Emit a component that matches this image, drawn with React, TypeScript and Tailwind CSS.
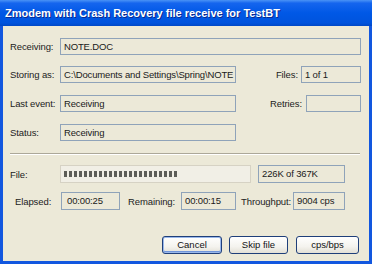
import React from 'react';

const font = "font-['Liberation_Sans',Arial,sans-serif]";

interface FieldProps {
  value?: string;
  className?: string;
}

const Field: React.FC<FieldProps> = ({ value = '', className = '' }) => (
  <div
    className={`h-[17px] border border-[#8fa3b9] bg-[#ece9d8] pl-[3px] text-[9.5px] tracking-[-0.15px] leading-[15px] text-[#1a1a1a] whitespace-nowrap overflow-hidden ${className}`}
  >
    {value}
  </div>
);

const Label: React.FC<{ children: React.ReactNode; className?: string }> = ({ children, className = '' }) => (
  <span className={`text-[9.5px] tracking-[-0.1px] leading-[17px] text-[#222] whitespace-nowrap ${className}`}>{children}</span>
);

const XpButton: React.FC<{ label: string; isDefault?: boolean; className?: string }> = ({ label, isDefault, className = '' }) => (
  <button
    className={`h-[18px] rounded-[3px] border border-[#1f3f7a] bg-[linear-gradient(to_bottom,#ffffff_0%,#f4f3ee_60%,#e3e0d6_100%)] text-[9.5px] leading-[14px] text-[#111] ${
      isDefault ? 'shadow-[inset_0_0_0_1px_#9ab8ea,inset_0_-1px_0_1px_#6f95da]' : ''
    } ${className}`}
  >
    {label}
  </button>
);

const segments = Array.from({ length: 23 });

export default function App() {
  return (
    <div className={`w-[372px] h-[264px] flex flex-col ${font}`}>
      {/* Title bar */}
      <div className="h-[26px] flex items-center pl-[5px] bg-[linear-gradient(to_bottom,#4a93f6_0%,#1565ee_12%,#0058e6_50%,#0053dd_88%,#0048c6_100%)]">
        <span className="text-white font-bold text-[11px] [text-shadow:1px_1px_0_#0c2a8f]">
          Zmodem with Crash Recovery file receive for TestBT
        </span>
      </div>

      {/* Body */}
      <div className="flex-1 flex flex-col bg-[#ece9d8] border-x-[3px] border-b-[3px] border-[#1257df] pl-[7px] pr-[8px] pt-[12px]">
        <div className="flex items-center">
          <Label className="w-[50px]">Receiving:</Label>
          <Field value="NOTE.DOC" className="flex-1" />
        </div>

        <div className="flex items-center mt-[11px]">
          <Label className="w-[50px]">Storing as:</Label>
          <Field value="C:\Documents and Settings\Spring\NOTE" className="w-[176px]" />
          <Label className="ml-auto mr-[3px]">Files:</Label>
          <Field value="1 of 1" className="w-[60px]" />
        </div>

        <div className="flex items-center mt-[12px]">
          <Label className="w-[50px]">Last event:</Label>
          <Field value="Receiving" className="w-[176px]" />
          <Label className="ml-auto mr-[4px]">Retries:</Label>
          <Field className="w-[55px]" />
        </div>

        <div className="flex items-center mt-[12px]">
          <Label className="w-[50px]">Status:</Label>
          <Field value="Receiving" className="w-[176px]" />
        </div>

        {/* Separator */}
        <div className="mt-[12px] mr-[1px] border-t border-[#aca899] border-b border-b-white" />

        <div className="flex items-center mt-[10px]">
          <Label className="w-[50px]">File:</Label>
          <div className="w-[191px] h-[18px] border border-[#d6d2c4] bg-[#f1efe6] flex items-center pl-[3px] gap-[2px]">
            {segments.map((_, i) => (
              <div key={i} className="w-[3px] h-[6px] bg-[#5d5d58]" />
            ))}
          </div>
          <Field value="226K of 367K" className="w-[87px] h-[18px] ml-[7px] leading-[16px]" />
        </div>

        <div className="flex items-center mt-[9px]">
          <Label className="w-[51px] pl-[5px]">Elapsed:</Label>
          <Field value="00:00:25" className="w-[59px] h-[18px] leading-[16px] pl-[5px]" />
          <Label className="ml-[8px] w-[53px]">Remaining:</Label>
          <Field value="00:00:15" className="w-[55px] h-[18px] leading-[16px]" />
          <Label className="ml-[5px] w-[52px]">Throughput:</Label>
          <Field value="9004 cps" className="w-[52px] h-[18px] leading-[16px]" />
        </div>

        <div className="flex items-center mt-[26px] pl-[152px]">
          <XpButton label="Cancel" isDefault className="w-[60px]" />
          <XpButton label="Skip file" className="w-[59px] ml-[7px]" />
          <XpButton label="cps/bps" className="w-[63px] ml-[8px]" />
        </div>
      </div>
    </div>
  );
}
